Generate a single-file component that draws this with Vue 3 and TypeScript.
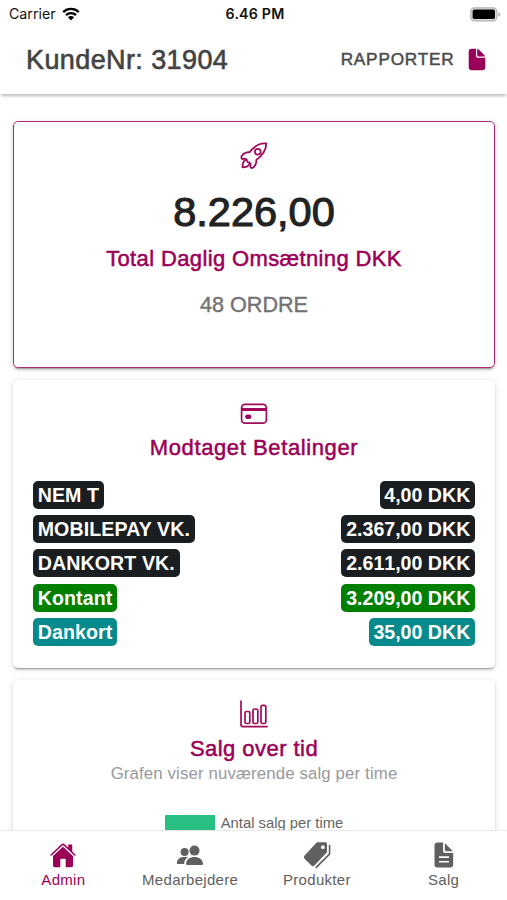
<script setup lang="ts">
interface Payment {
  name: string
  amount: string
  tone: 'dark' | 'green' | 'teal'
}

interface Tab {
  id: 'admin' | 'staff' | 'products' | 'sales'
  label: string
}

const payments: Payment[] = [
  { name: 'NEM T', amount: '4,00 DKK', tone: 'dark' },
  { name: 'MOBILEPAY VK.', amount: '2.367,00 DKK', tone: 'dark' },
  { name: 'DANKORT VK.', amount: '2.611,00 DKK', tone: 'dark' },
  { name: 'Kontant', amount: '3.209,00 DKK', tone: 'green' },
  { name: 'Dankort', amount: '35,00 DKK', tone: 'teal' },
]

const tabs: Tab[] = [
  { id: 'admin', label: 'Admin' },
  { id: 'staff', label: 'Medarbejdere' },
  { id: 'products', label: 'Produkter' },
  { id: 'sales', label: 'Salg' },
]

const activeTab: Tab['id'] = 'admin'
</script>

<template>
  <div class="screen">
    <div class="status">
      <div class="carrier">
        <span>Carrier</span>
        <svg class="wifi" viewBox="0 0 18 14">
          <path d="M1.2 5.1a11.2 11.2 0 0 1 15.6 0M4 8.1a7.2 7.2 0 0 1 10 0" fill="none" stroke="#000" stroke-width="2.3" />
          <path d="M5.9 10.3a4.4 4.4 0 0 1 6.2 0L9 13.5z" />
        </svg>
      </div>
      <span class="clock">6.46 PM</span>
      <div class="power">
        <svg class="battery" viewBox="0 0 31 15">
          <rect x=".8" y=".8" width="26" height="13" rx="3.6" fill="#ddd" stroke="#b3b3b3" stroke-width="1.2" />
          <rect x="2.6" y="2.6" width="22.4" height="9.4" rx="1.8" />
          <path d="M28.4 5v4.8q1.7-.6 1.7-2.4t-1.7-2.4" fill="#aaa" />
        </svg>
      </div>
    </div>

    <header class="toolbar">
      <h1>KundeNr: 31904</h1>
      <button class="reports" type="button">
        <span>RAPPORTER</span>
        <svg viewBox="0 0 18 23">
          <path d="M3.6.8H8v6.4Q8 9.8 10.6 9.8H17.3V19q0 3.2-3.2 3.2H3.9Q.7 22.2.7 19V3.9Q.7.8 3.6.8" />
          <path d="M9.200.9q1 0 1.800.8l5.200 5.200q.7.700.7 1.600h-6.200q-1.500 0-1.500-1.500z" />
        </svg>
      </button>
    </header>

    <main class="content">
      <section class="card total">
        <svg class="rocket" viewBox="0 0 28 28">
          <g fill="none" stroke="currentColor" stroke-width="1.8" stroke-linejoin="round" stroke-linecap="round">
            <path d="M26.2 1.5C20.5.8 14.8 3.6 9.6 10.1c-3-.2-5.600 1-7.600 3.400-.8 1-.6 2.600.1 3.600l3.300-.4 1.500 1.300c-.2 1.400.9 2.500 2.300 2.400l1.400 1.400-.1 3.700c.9.6 2.200.6 3.100-.3 2.100-2 3-4.400 2.700-7.200 6.700-5 10-10.600 9.900-16.500z" />
            <circle cx="17.8" cy="9.7" r="2.9" />
            <path d="M5.200 17.900c-2.200 1.500-2.700 4.500-2.700 7.400 3.200 0 5.900-.8 7-3.400" />
          </g>
        </svg>
        <div class="sum">8.226,00</div>
        <h2 class="total-title">Total Daglig Omsætning DKK</h2>
        <div class="orders">48 ORDRE</div>
      </section>

      <section class="card payments">
        <svg class="credit" viewBox="0 0 28 22">
          <rect x="1.6" y="1.3" width="24.8" height="18.9" rx="3.4" fill="none" stroke="currentColor" stroke-width="1.7" />
          <path d="M1.6 5h24.8v3H1.6z" fill="currentColor" />
          <rect x="5.3" y="11.5" width="6" height="4.6" rx="1.8" fill="currentColor" />
        </svg>
        <h2>Modtaget Betalinger</h2>
        <ul class="rows">
          <li v-for="p in payments" :key="p.name">
            <span class="badge name" :class="p.tone">{{ p.name }}</span>
            <span class="badge amount" :class="p.tone">{{ p.amount }}</span>
          </li>
        </ul>
      </section>

      <section class="card chart">
        <svg class="bars" viewBox="0 0 28 28">
          <g fill="none" stroke="currentColor" stroke-width="1.7" stroke-linejoin="round" stroke-linecap="round">
            <path d="M1 1v23.6q0 2 2 2h24" />
            <rect x="5" y="11.5" width="4.8" height="12" rx="1.5" />
            <rect x="13" y="9" width="4.8" height="14.5" rx="1.5" />
            <rect x="21" y="5.3" width="4.8" height="18.2" rx="1.5" />
          </g>
        </svg>
        <h2 class="chart-title">Salg over tid</h2>
        <p>Grafen viser nuværende salg per time</p>
        <div class="legend">
          <i class="swatch"></i>
          <span>Antal salg per time</span>
        </div>
      </section>
    </main>

    <nav class="tabs">
      <a v-for="t in tabs" :key="t.id" class="tab" :class="{ active: t.id === activeTab }">
        <svg viewBox="0 0 28 28" fill="currentColor">
          <template v-if="t.id === 'admin'">
            <path d="M14 5.800 24 15V24.500q0 1.800-1.800 1.800H16.700V18.600q0-.8-.8-.8h-3.800q-.8 0-.8.8v7.700H5.800Q4 26.300 4 24.500V15z" />
            <path d="M2.100 14 12.900 3.900q1.100-1 2.200 0L25.900 14" fill="none" stroke="#fff" stroke-width="2.600" />
            <path d="M19.200 3.500h4v7.400l-4-3.700z" />
            <path d="M2.100 14 12.900 3.900q1.100-1 2.200 0L25.900 14" fill="none" stroke="currentColor" stroke-width="1.500" stroke-linecap="round" />
          </template>
          <template v-else-if="t.id === 'staff'">
            <circle cx="8.6" cy="11" r="4" />
            <circle cx="18.5" cy="9.6" r="5" />
            <path d="M.9 22.2c0-4.700 4.200-6.500 8.900-6.100 1 .1 1.600.3 2 .5-2.200 1.300-3.500 3.100-3.700 6.400H1.800q-.9 0-.9-.8" />
            <path d="M10 22.800c.3-4.900 4.300-6.900 8.500-6.900s8 2.100 8.500 6.600q.1 1.500-1.200 1.500H11.200q-1.200 0-1.200-1.200" />
          </template>
          <template v-else-if="t.id === 'products'">
            <path fill-rule="evenodd" d="M14.9 1.300h7.600q1.500 0 1.500 1.500v7.500q0 1-.7 1.700L11.400 24.400q-1.500 1.500-3 0l-6.800-6.700q-1.600-1.600 0-3.200L13.200 2q.7-.7 1.700-.7m5 3a1.900 1.900 0 1 0 0 3.800 1.900 1.900 0 0 0 0-3.800" />
            <path d="M26.600 4.500v7.700q0 .8-.6 1.400L13.200 26.400" fill="none" stroke="currentColor" stroke-width="1.6" stroke-linecap="round" />
          </template>
          <template v-else>
            <path fill-rule="evenodd" d="M7.500 1.500H13v8Q13 12 15.500 12h7.700v11.500q0 3-3 3H7.500q-3 0-3-3V4.500q0-3 3-3M9 15.300v1.700h10v-1.700zm0 4.600v1.700h10v-1.700z" />
            <path d="M14.800 2l8 8.300h-6.500q-1.500 0-1.500-1.500z" />
          </template>
        </svg>
        <span>{{ t.label }}</span>
      </a>
    </nav>
  </div>
</template>

<style>
body {
  margin: 0;
  background: #fff;
}
</style>

<style scoped>
.screen {
  width: 507px;
  height: 900px;
  display: flex;
  flex-direction: column;
  overflow: hidden;
  background: #fff;
  font-family: 'Liberation Sans', Arial, sans-serif;
  color: #222;
}
.status {
  flex: none;
  height: 28px;
  box-sizing: border-box;
  padding: 0 6px 2px 9px;
  display: grid;
  grid-template-columns: 1fr auto 1fr;
  align-items: center;
  font: 14.2px/28px Inter, sans-serif;
  color: #111;
}
.carrier {
  display: flex;
  align-items: center;
  gap: 6px;
}
.wifi {
  width: 18px;
  height: 14px;
}
.clock {
  font-weight: 600;
  font-size: 14.2px;
  letter-spacing: .2px;
}
.power {
  display: flex;
  justify-content: flex-end;
}
.battery {
  width: 31px;
  height: 15px;
}
.toolbar {
  flex: none;
  height: 66px;
  box-sizing: border-box;
  padding: 0 21px 2px 26px;
  display: flex;
  align-items: center;
  justify-content: space-between;
  box-shadow: 0 3px 3px -1px rgba(0, 0, 0, .26);
}
h1 {
  margin: 0;
  font-size: 27px;
  font-weight: 400;
  letter-spacing: .4px;
  color: #424242;
  -webkit-text-stroke: .6px;
}
.reports {
  display: flex;
  align-items: center;
  gap: 13.5px;
  padding: 0;
  border: 0;
  background: none;
  font: 17.2px 'Liberation Sans', Arial, sans-serif;
  letter-spacing: .8px;
  color: #4a4a4a;
  -webkit-text-stroke: .5px;
}
.reports span {
  margin-top: -2px;
}
.reports svg {
  width: 18px;
  height: 23px;
  margin-top: -2px;
  fill: #9b0058;
}
.content {
  flex: 1;
  min-height: 0;
  overflow: hidden;
  margin-top: 6px;
  padding: 21px 12px 0 13px;
  display: flex;
  flex-direction: column;
  gap: 12px;
}
.card {
  flex: none;
  box-sizing: border-box;
  border-radius: 5px;
  display: flex;
  flex-direction: column;
  align-items: center;
  box-shadow: 0 3px 1px -2px rgba(0, 0, 0, .2), 0 2px 2px rgba(0, 0, 0, .14), 0 1px 6px rgba(0, 0, 0, .12);
}
.card > svg {
  color: #a00a5c;
}
h2 {
  margin: 0;
  font-size: 22px;
  line-height: 28px;
  font-weight: 400;
  letter-spacing: .6px;
  color: #9b0058;
  -webkit-text-stroke: .5px;
}
.total {
  height: 247px;
  padding-top: 20px;
  border: 1px solid #b02a72;
}
.rocket {
  width: 28px;
  height: 28px;
}
.sum {
  margin-top: 15px;
  font-size: 41.5px;
  line-height: 54px;
  color: #222;
  -webkit-text-stroke: 1.1px;
}
.total-title {
  margin-top: 6px;
  letter-spacing: .37px;
}
.orders {
  margin-top: 18px;
  font-size: 21.6px;
  line-height: 28px;
  color: #737373;
  -webkit-text-stroke: .4px;
}
.payments {
  height: 288px;
  padding-top: 23px;
}
.credit {
  width: 28px;
  height: 22px;
}
.payments h2 {
  margin-top: 9px;
}
.rows {
  width: 100%;
  box-sizing: border-box;
  margin: 19px 0 0;
  padding: 0 20px;
  list-style: none;
}
.rows li {
  height: 34.2px;
  display: flex;
  justify-content: space-between;
  align-items: flex-start;
}
.badge {
  height: 28px;
  padding: 0 4.7px;
  border-radius: 5px;
  font-size: 19.6px;
  line-height: 28px;
  font-weight: 700;
  color: #fff;
}
.name {
  letter-spacing: .1px;
}
.amount {
  font-kerning: none;
}
.dark {
  background: #1b1e21;
}
.green {
  background: #008000;
}
.teal {
  background: #068a8b;
}
.chart {
  height: 300px;
  padding-top: 20px;
}
.bars {
  width: 28px;
  height: 28px;
}
.chart-title {
  margin-top: 7px;
  letter-spacing: .45px;
}
.chart p {
  margin: 0;
  font-size: 16.8px;
  line-height: 22px;
  letter-spacing: .14px;
  color: #98999d;
}
.legend {
  margin-top: 28px;
  display: flex;
  align-items: center;
  gap: 6px;
  font-size: 14.8px;
  line-height: 20px;
  color: #666;
}
.swatch {
  width: 50px;
  height: 16px;
  background: #28c082;
}
.tabs {
  flex: none;
  height: 70px;
  box-sizing: border-box;
  display: grid;
  grid-template-columns: repeat(4, 1fr);
  background: #fff;
  border-top: 1px solid #e8e8e8;
}
.tab {
  display: flex;
  flex-direction: column;
  align-items: center;
  padding-top: 10px;
  font-size: 15px;
  line-height: 20px;
  letter-spacing: .3px;
  color: #606060;
}
.tab svg {
  width: 28px;
  height: 28px;
}
.tab span {
  margin-top: 1px;
}
.tab.active {
  color: #9b0058;
}
</style>
